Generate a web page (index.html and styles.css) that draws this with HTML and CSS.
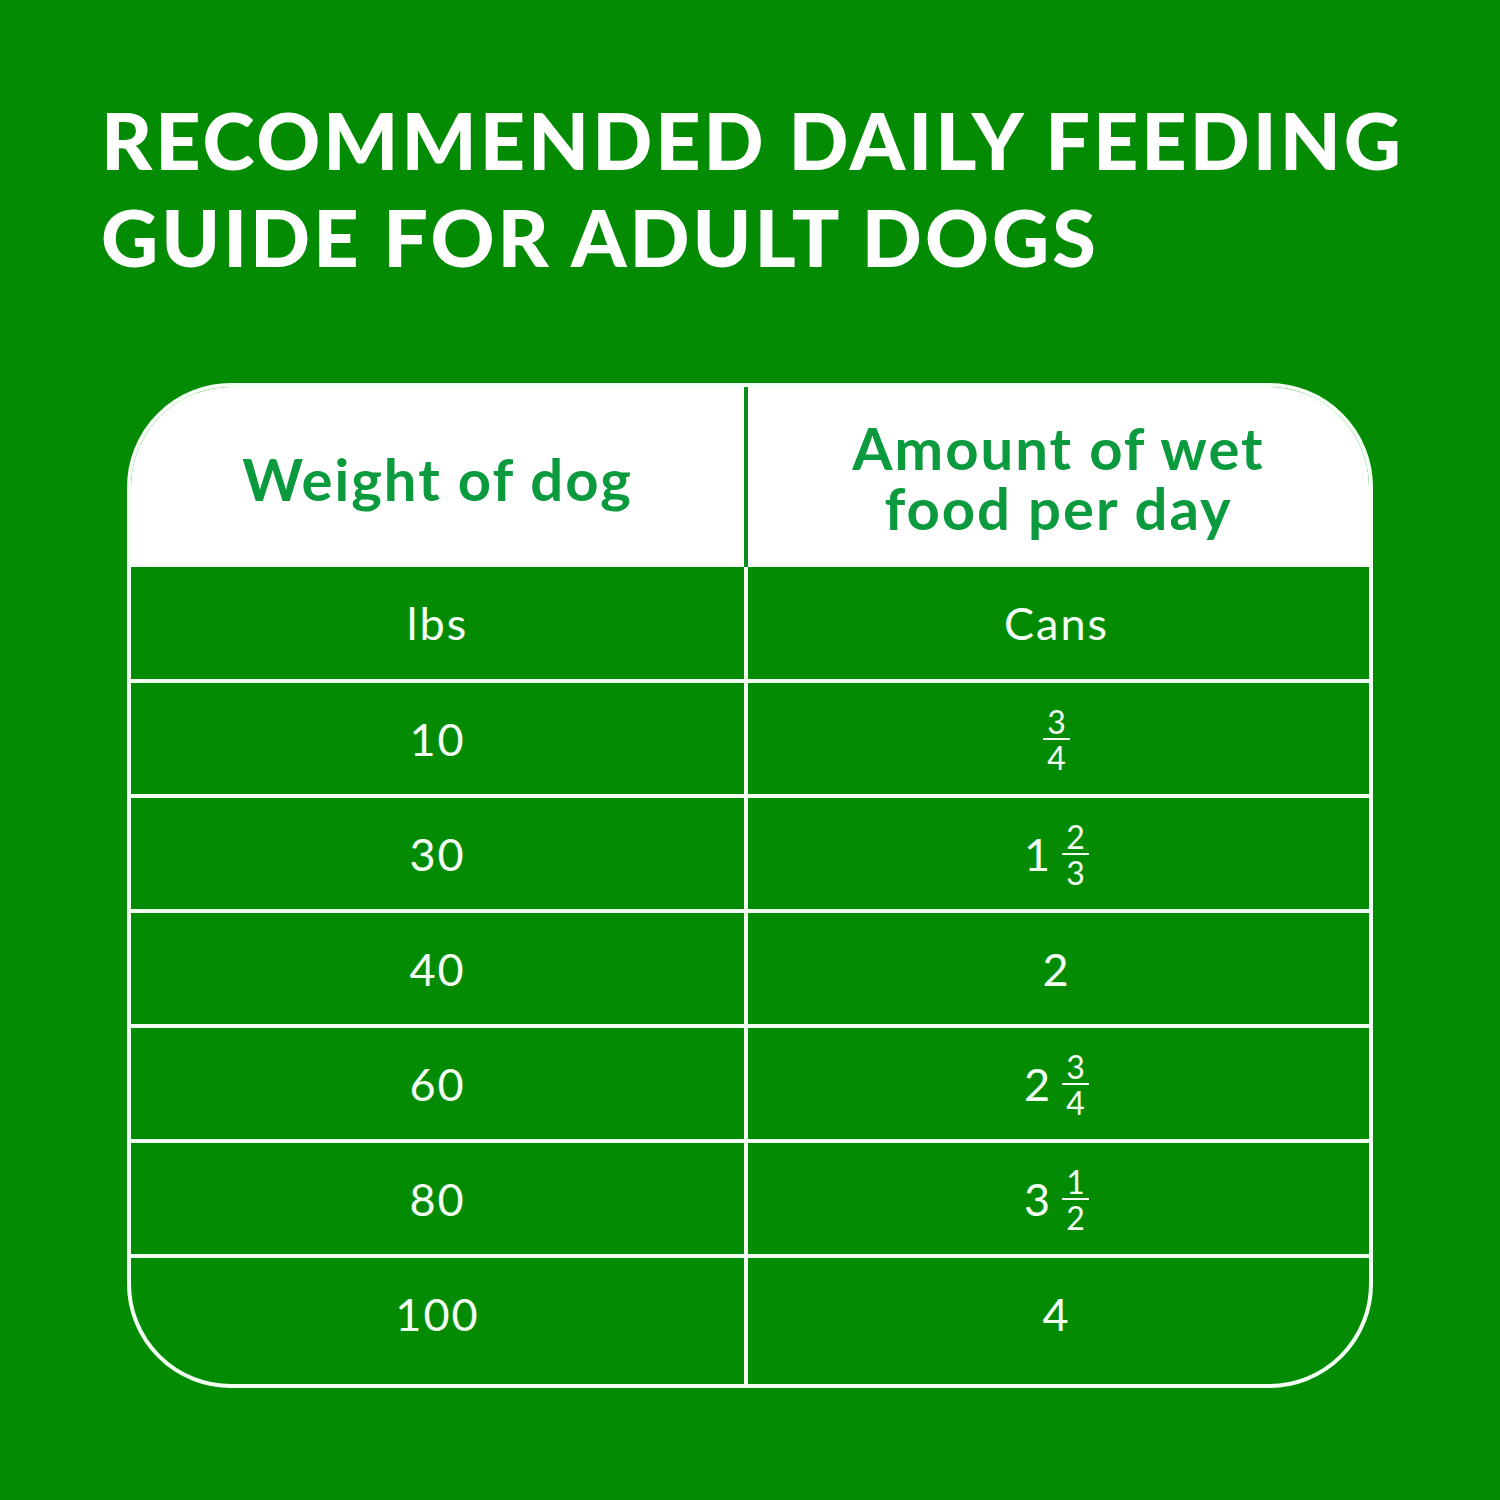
FILE: index.html
```html
<!DOCTYPE html>
<html>
<head>
<meta charset="utf-8">
<link rel="stylesheet" href="styles.css">
</head>
<body>
<div class="page">
  <h1 class="title">RECOMMENDED DAILY FEEDING<br>GUIDE FOR ADULT DOGS</h1>
  <div class="guide">
    <div class="head">
      <div class="hcell hleft">Weight of dog</div>
      <div class="hcell"><span class="hline">Amount of wet</span><span class="hline">food per day</span></div>
    </div>
    <div class="row first">
      <div class="cell cleft">lbs</div>
      <div class="cell">Cans</div>
    </div>
    <div class="row">
      <div class="cell cleft">10</div>
      <div class="cell"><span class="frac"><span>3</span><span class="bar"></span><span>4</span></span></div>
    </div>
    <div class="row">
      <div class="cell cleft">30</div>
      <div class="cell"><span class="whole">1</span><span class="frac"><span>2</span><span class="bar"></span><span>3</span></span></div>
    </div>
    <div class="row">
      <div class="cell cleft">40</div>
      <div class="cell">2</div>
    </div>
    <div class="row">
      <div class="cell cleft">60</div>
      <div class="cell"><span class="whole">2</span><span class="frac"><span>3</span><span class="bar"></span><span>4</span></span></div>
    </div>
    <div class="row">
      <div class="cell cleft">80</div>
      <div class="cell"><span class="whole">3</span><span class="frac"><span>1</span><span class="bar"></span><span>2</span></span></div>
    </div>
    <div class="row last">
      <div class="cell cleft">100</div>
      <div class="cell">4</div>
    </div>
  </div>
</div>
</body>
</html>
```
FILE: styles.css
```css
html, body {
  margin: 0;
  padding: 0;
  background: #038c03;
}
body {
  width: 1500px;
  height: 1500px;
  font-family: Lato, "Noto Sans", sans-serif;
}
.page {
  padding: 91px 0 0 0;
}
.title {
  margin: 0 0 0 101px;
  color: #ffffff;
  font-family: Lato, sans-serif;
  font-weight: 900;
  font-size: 79px;
  line-height: 97px;
  letter-spacing: 3px;
}
.guide {
  margin: 98px 0 0 127px;
  width: 1246px;
  box-sizing: border-box;
  border: 4px solid #f4fff4;
  border-radius: 104px;
  overflow: hidden;
  background: #038c03;
}
.head {
  display: grid;
  grid-template-columns: 617px 621px;
  height: 180px;
  background: #ffffff;
}
.hcell {
  display: flex;
  flex-direction: column;
  align-items: center;
  justify-content: center;
  text-align: center;
  color: #0b9a3e;
  font-weight: 700;
  font-size: 58px;
  line-height: 60px;
  letter-spacing: 2px;
  padding-top: 2px;
}
.hline {
  display: block;
}
.hleft {
  border-right: 4px solid #0b8f1a;
  padding-top: 4px;
}
.row {
  display: grid;
  grid-template-columns: 617px 617px;
  height: 111px;
  border-top: 4px solid #f4fff4;
}
.row.first {
  border-top: none;
  height: 112px;
}
.row.last {
  height: 126px;
}
.row.last .cell {
  padding-bottom: 14px;
}
.cell {
  display: flex;
  align-items: center;
  justify-content: center;
  color: #f4fff4;
  font-size: 45px;
  font-weight: 400;
  letter-spacing: 2px;
}
.cleft {
  border-right: 4px solid #f4fff4;
}
.whole {
  margin-right: 10px;
}
.frac {
  display: inline-flex;
  flex-direction: column;
  align-items: center;
  font-size: 32px;
  line-height: 29px;
  letter-spacing: 0;
  padding-top: 2px;
}
.bar {
  display: block;
  width: 27px;
  height: 2px;
  margin: 2px 0 3px;
  background: #f4fff4;
}
```
